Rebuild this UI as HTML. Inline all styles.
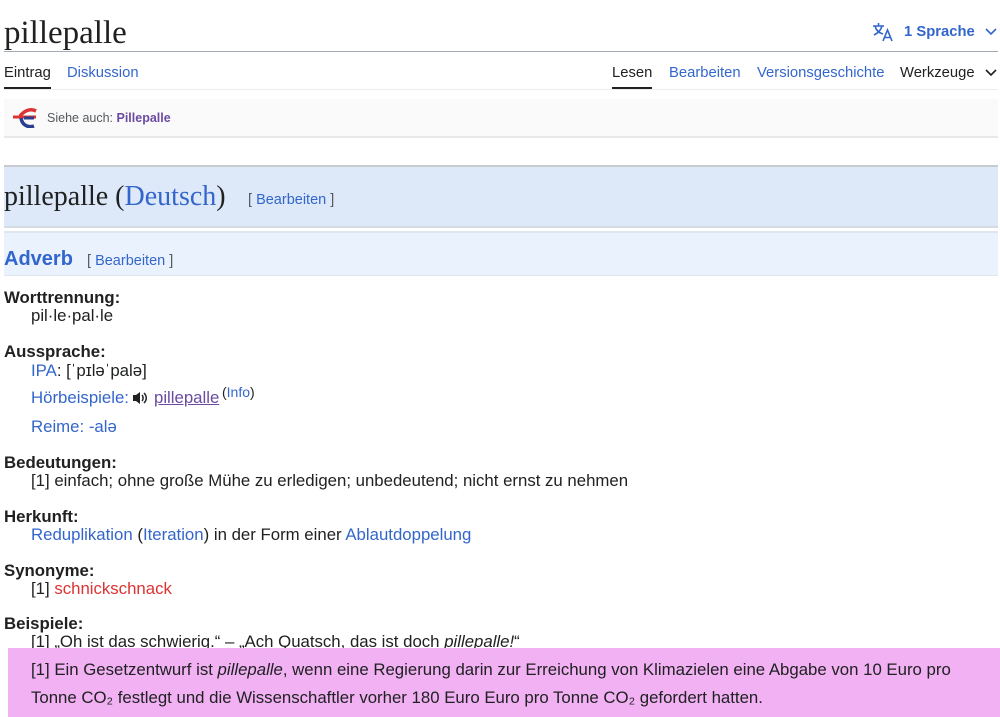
<!DOCTYPE html>
<html><head><meta charset="utf-8"><style>
body{margin:0;width:1000px;height:717px;overflow:hidden;background:#fff;font-family:"Liberation Sans",sans-serif;color:#202122;position:relative}
.a{position:absolute;white-space:nowrap}
a,.l{color:#3366cc;text-decoration:none}
.t{font-size:16.8px;line-height:19px}
.n{font-size:14.8px;line-height:18px}
b{font-weight:bold}
</style></head><body>
<div class="a" style="left:4px;top:13px;font-family:'Liberation Serif',serif;font-size:33px;line-height:40px">pillepalle</div>
<div class="a" style="left:4px;top:51px;width:994px;height:1px;background:#a2a9b1"></div>
<svg class="a" style="left:872px;top:22px" width="22" height="20" viewBox="0 0 22 20"><g fill="none" stroke="#3366cc" stroke-width="1.6"><path d="M1 4h11M6.5 1v3M3 4c1 4 4 7 8 8M10 4c-1 4-4 7-8 9"/><path d="M11 19l4.5-11 4.5 11M12.5 15.5h6"/></g></svg>
<div class="a n" style="left:904px;top:23px;color:#3366cc;font-weight:bold">1 Sprache</div>
<svg class="a" style="left:985px;top:28px" width="12" height="8" viewBox="0 0 12 8"><path d="M1 1l5 5 5-5" fill="none" stroke="#3366cc" stroke-width="1.6"/></svg>

<div class="a n" style="left:4px;top:64px">Eintrag</div>
<div class="a" style="left:4px;top:87px;width:47px;height:2px;background:#202122"></div>
<div class="a n l" style="left:67px;top:64px">Diskussion</div>
<div class="a n" style="left:612px;top:64px">Lesen</div>
<div class="a" style="left:612px;top:87px;width:40px;height:2px;background:#202122"></div>
<div class="a n l" style="left:669px;top:64px">Bearbeiten</div>
<div class="a n l" style="left:757px;top:64px">Versionsgeschichte</div>
<div class="a n" style="left:900px;top:64px">Werkzeuge</div>
<svg class="a" style="left:985px;top:69px" width="12" height="8" viewBox="0 0 12 8"><path d="M1 1l5 5 5-5" fill="none" stroke="#202122" stroke-width="1.6"/></svg>
<div class="a" style="left:4px;top:89px;width:994px;height:1px;background:#eaecf0"></div>

<div class="a" style="left:4px;top:99px;width:994px;height:37px;background:#fafafa;border-bottom:2px solid #e8e8e8"></div>
<svg class="a" style="left:12px;top:108px" width="26" height="20" viewBox="0 0 26 20"><path d="M24 3c-6-3-12 0-16 5" fill="none" stroke="#d33" stroke-width="3.5"/><path d="M1 9h23" stroke="#d33" stroke-width="3"/><path d="M22 18c-6 2-12-1-13-8" fill="none" stroke="#2a3f8f" stroke-width="3.5"/><path d="M12 10h10" stroke="#2a3f8f" stroke-width="3"/></svg>
<div class="a" style="left:47px;top:111px;font-size:12.5px;color:#54595d">Siehe auch: <b style="color:#6b4ba1">Pillepalle</b></div>

<div class="a" style="left:4px;top:165px;width:994px;height:59px;background:#dde9f8;border-top:2px solid #c8ccd1;border-bottom:2px solid #d4dbe4"></div>
<div class="a" style="left:4px;top:178px;font-family:'Liberation Serif',serif;font-size:28px;line-height:38px">pillepalle (<span class="l">Deutsch</span>)</div>
<div class="a" style="left:248px;top:192px;font-size:14.5px;color:#54595d">[ <span class="l">Bearbeiten</span> ]</div>

<div class="a" style="left:4px;top:231px;width:994px;height:42px;background:#eaf3fd;border-top:2px solid #dfe6ee;border-bottom:1px solid #dfe6ee"></div>
<div class="a" style="left:4px;top:248px;font-size:20px;font-weight:bold;color:#3366cc">Adverb</div>
<div class="a" style="left:87px;top:253px;font-size:14.5px;color:#54595d">[ <span class="l">Bearbeiten</span> ]</div>

<div class="a t" style="left:4px;top:288px"><b>Worttrennung:</b></div>
<div class="a t" style="left:31px;top:306px">pil·le·pal·le</div>
<div class="a t" style="left:4px;top:342px"><b>Aussprache:</b></div>
<div class="a t" style="left:31px;top:361px"><span class="l">IPA</span>: [ˈpɪləˈpalə]</div>
<div class="a t" style="left:31px;top:388px"><span class="l">Hörbeispiele:</span></div>
<svg class="a" style="left:132px;top:391px" width="16" height="14" viewBox="0 0 16 14"><path d="M1 4h3l4-3v12l-4-3H1z" fill="#202122"/><path d="M10 4c1.5 1.5 1.5 4.5 0 6M12 2c3 3 3 7 0 10" fill="none" stroke="#202122" stroke-width="1.5"/></svg>
<div class="a t" style="left:154px;top:388px;color:#6b4ba1;text-decoration:underline">pillepalle</div>
<div class="a" style="left:222px;top:384px;font-size:14px">(<span class="l">Info</span>)</div>
<div class="a t l" style="left:31px;top:417px">Reime: -alə</div>
<div class="a t" style="left:4px;top:453px"><b>Bedeutungen:</b></div>
<div class="a t" style="left:31px;top:471px">[1] einfach; ohne große Mühe zu erledigen; unbedeutend; nicht ernst zu nehmen</div>
<div class="a t" style="left:4px;top:507px"><b>Herkunft:</b></div>
<div class="a t" style="left:31px;top:525px"><span class="l">Reduplikation</span> (<span class="l">Iteration</span>) in der Form einer <span class="l">Ablautdoppelung</span></div>
<div class="a t" style="left:4px;top:561px"><b>Synonyme:</b></div>
<div class="a t" style="left:31px;top:579px">[1] <span style="color:#d33">schnickschnack</span></div>
<div class="a t" style="left:4px;top:614px"><b>Beispiele:</b></div>
<div class="a t" style="left:31px;top:632px">[1] „Oh ist das schwierig.“ – „Ach Quatsch, das ist doch <i>pillepalle!</i>“</div>

<div class="a" style="left:8px;top:648px;width:992px;height:69px;background:#f1b1f3"></div>
<div class="a t" style="left:31px;top:660px">[1] Ein Gesetzentwurf ist <i>pillepalle</i>, wenn eine Regierung darin zur Erreichung von Klimazielen eine Abgabe von 10 Euro pro</div>
<div class="a t" style="left:31px;top:688px">Tonne CO₂ festlegt und die Wissenschaftler vorher 180 Euro Euro pro Tonne CO₂ gefordert hatten.</div>
</body></html>
